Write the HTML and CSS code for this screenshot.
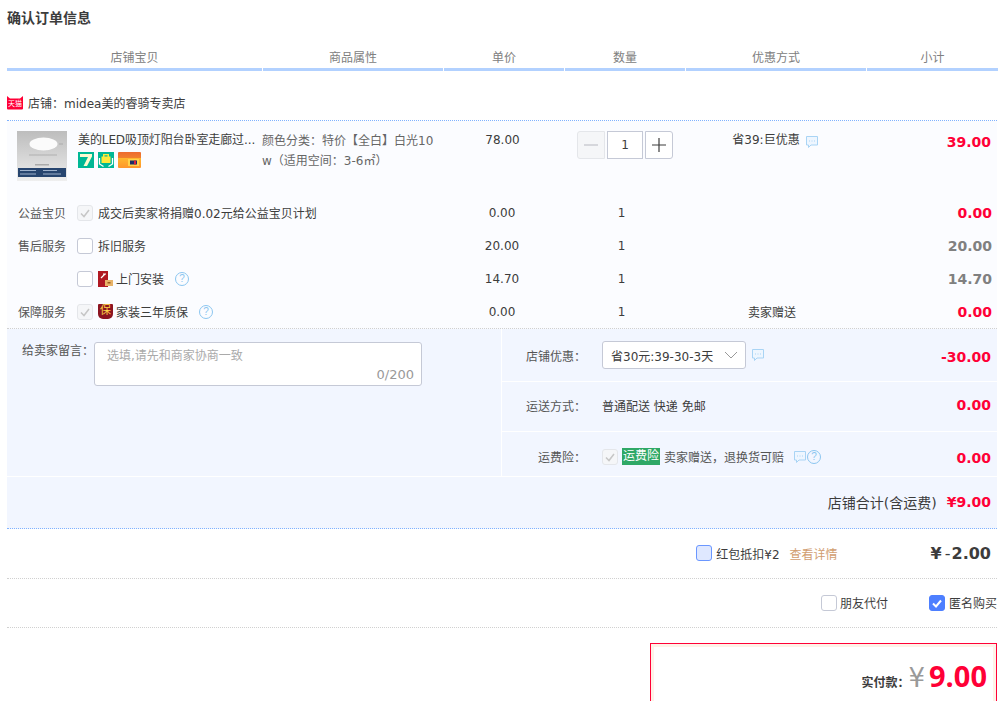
FILE: index.html
```html
<!DOCTYPE html>
<html lang="zh-CN">
<head>
<meta charset="utf-8">
<title>确认订单信息</title>
<link rel="stylesheet" href="styles.css">
</head>
<body>
<svg class="defs" width="0" height="0">
  <symbol id="msg" viewBox="0 0 14 14"><path d="M1.500 1.500h11v8.500H6l-2.500 2.500V10h-2z" fill="#eef6ff" stroke="#a9d4f5" stroke-width="1"/><path d="M4 6h1M6.500 6h1M9 6h1" stroke="#a9d4f5" stroke-width="1"/></symbol>
</svg>
<main class="page">
  <h1 class="page-title">确认订单信息</h1>
  <div class="head-row">
    <div class="head-cell">店铺宝贝</div>
    <div class="head-cell">商品属性</div>
    <div class="head-cell">单价</div>
    <div class="head-cell">数量</div>
    <div class="head-cell">优惠方式</div>
    <div class="head-cell">小计</div>
  </div>
  <div class="shop-row">
    <svg class="tmall" viewBox="0 0 16 14" width="16" height="14"><path fill="#ff0036" d="M0 0l3 2.500h10L16 0v12.500a1 1 0 0 1-1 1H1a1 1 0 0 1-1-1z"/></svg>
    <span class="tmall-text">天猫</span>
    <span>店铺：midea美的睿骑专卖店</span>
  </div>

  <section class="items">
    <div class="order-row product-row">
      <div class="product-cell">
        <svg class="thumb" viewBox="0 0 50 50" width="50" height="50">
          <defs><linearGradient id="thumbBg" x1="0" y1="0" x2="0" y2="1"><stop offset="0" stop-color="#bdbdbd"/><stop offset=".7" stop-color="#dedede"/><stop offset="1" stop-color="#efefef"/></linearGradient></defs>
          <rect width="50" height="50" fill="url(#thumbBg)"/>
          <ellipse cx="26.500" cy="13" rx="14" ry="6.500" fill="#fbfbfb"/>
          <path d="M42 13h4M12 24h28" stroke="#999" stroke-width=".6"/>
          <rect x="18" y="33" width="14" height="1.500" fill="#aaa"/>
          <rect x="1" y="37" width="48" height="9" fill="#27456f"/>
          <path d="M3 39.500h16M26 39.500h14M3 43h16M26 43h18" stroke="#9fb2cc" stroke-width="1"/>
        </svg>
        <div class="product-info">
          <div class="product-title">美的LED吸顶灯阳台卧室走廊过...</div>
          <div class="badges">
            <svg viewBox="0 0 16 16" width="16" height="16"><rect width="16" height="16" fill="#00b895"/><path d="M2 2h12v2.500L9 14H5.500l4.500-9H2z" fill="#fffbd0"/></svg>
            <svg viewBox="0 0 16 16" width="16" height="16"><rect width="16" height="16" fill="#00b895"/><path d="M5 4.500V2h6v2.500h1.500V11h-9V4.500z" fill="#ffe93b"/><path d="M6.500 4.500V3.300h3v1.200z" fill="#00b895"/><path d="M1.500 6v6l4 2.500M14.500 6v6l-4 2.500" stroke="#fff" fill="none" stroke-width="1.300"/></svg>
            <svg viewBox="0 0 23 16" width="23" height="16"><defs><linearGradient id="cardBg" x1="0" y1="0" x2="0" y2="1"><stop offset="0" stop-color="#ed6a2f"/><stop offset=".35" stop-color="#f07f2f"/><stop offset=".4" stop-color="#ffb62e"/><stop offset="1" stop-color="#ff962c"/></linearGradient></defs><rect width="23" height="16" rx="1" fill="url(#cardBg)"/><rect x="10" y="7" width="11" height="7" fill="#ffd24a"/><rect x="12" y="8.500" width="7" height="4" fill="#1d2f66"/><rect x="16" y="8.500" width="2" height="4" fill="#d8203a"/></svg>
          </div>
        </div>
      </div>
      <div class="spec-cell">颜色分类：特价【全白】白光10w（适用空间：3-6㎡）</div>
      <div class="price-cell">78.00</div>
      <div class="qty-cell">
        <span class="qty-btn qty-minus"><svg viewBox="0 0 14 14" width="14" height="14"><path d="M0 7h14" stroke="#c4c6cc" stroke-width="1.300"/></svg></span>
        <span class="qty-input">1</span>
        <span class="qty-btn"><svg viewBox="0 0 14 14" width="14" height="14"><path d="M0 7h14M7 0v14" stroke="#3c3c3c" stroke-width="1.200"/></svg></span>
      </div>
      <div class="promo-cell">省39:巨优惠
        <svg class="msg-icon" viewBox="0 0 14 14" width="14" height="14"><use href="#msg"/></svg>
      </div>
      <div class="amount red">39.00</div>
    </div>

    <div class="order-row service-row">
      <div class="service-main">
        <span class="service-label">公益宝贝</span>
        <span class="check check-disabled"><svg viewBox="0 0 16 16" width="16" height="16"><path d="M4 8.500l3 3 5-6.500" stroke="#c6c6c6" stroke-width="1.500" fill="none"/></svg></span>
        <span>成交后卖家将捐赠0.02元给公益宝贝计划</span>
      </div>
      <div class="price-cell">0.00</div>
      <div class="count-cell">1</div>
      <div></div>
      <div class="amount red">0.00</div>
    </div>

    <div class="order-row service-row">
      <div class="service-main">
        <span class="service-label">售后服务</span>
        <span class="check"></span>
        <span>拆旧服务</span>
      </div>
      <div class="price-cell">20.00</div>
      <div class="count-cell">1</div>
      <div></div>
      <div class="amount grey">20.00</div>
    </div>

    <div class="order-row service-row">
      <div class="service-main">
        <span class="service-label"></span>
        <span class="check"></span>
        <svg class="svc-icon" viewBox="0 0 16 16" width="16" height="16"><rect x="0" y="0" width="10" height="16" fill="#b01822"/><path d="M3 7l4-4M5 3h3" stroke="#fff" stroke-width="1.200"/><rect x="7" y="9" width="8" height="6" fill="#e8b46a"/><rect x="9.500" y="11" width="3" height="1.500" fill="#9a5b1e"/></svg>
        <span>上门安装</span>
        <span class="help help-spaced">?</span>
      </div>
      <div class="price-cell">14.70</div>
      <div class="count-cell">1</div>
      <div></div>
      <div class="amount grey">14.70</div>
    </div>

    <div class="order-row service-row">
      <div class="service-main">
        <span class="service-label">保障服务</span>
        <span class="check check-disabled"><svg viewBox="0 0 16 16" width="16" height="16"><path d="M4 8.500l3 3 5-6.500" stroke="#c6c6c6" stroke-width="1.500" fill="none"/></svg></span>
        <span class="bao">保</span>
        <span>家装三年质保</span>
        <span class="help help-spaced">?</span>
      </div>
      <div class="price-cell">0.00</div>
      <div class="count-cell">1</div>
      <div class="gift-cell">卖家赠送</div>
      <div class="amount red">0.00</div>
    </div>
  </section>

  <section class="shop-extra">
    <div class="extra-grid">
      <div class="message-col">
        <label class="message-label">给卖家留言：</label>
        <div class="message-box">
          <span class="placeholder">选填,请先和商家协商一致</span>
          <span class="counter">0/200</span>
        </div>
      </div>
      <div class="options-col">
        <div class="option-row option-promo">
          <span class="option-label">店铺优惠：</span>
          <div class="option-body">
            <span class="select">省30元:39-30-3天
              <svg viewBox="0 0 14 8" width="14" height="8"><path d="M1 1l6 6 6-6" stroke="#999" fill="none" stroke-width="1"/></svg>
            </span>
            <svg class="msg-icon" viewBox="0 0 14 14" width="14" height="14"><use href="#msg"/></svg>
          </div>
          <span class="amount red">-30.00</span>
        </div>
        <div class="option-row option-ship">
          <span class="option-label">运送方式：</span>
          <div class="option-body">普通配送 快递 免邮</div>
          <span class="amount red">0.00</span>
        </div>
        <div class="option-row option-ins">
          <span class="option-label">运费险：</span>
          <div class="option-body">
            <span class="check check-disabled"><svg viewBox="0 0 16 16" width="16" height="16"><path d="M4 8.500l3 3 5-6.500" stroke="#c6c6c6" stroke-width="1.500" fill="none"/></svg></span>
            <span class="ins-tag">运费险</span>
            <span class="ins-text">卖家赠送，退换货可赔</span>
            <svg class="msg-icon" viewBox="0 0 14 14" width="14" height="14"><use href="#msg"/></svg>
            <span class="help">?</span>
          </div>
          <span class="amount red">0.00</span>
        </div>
      </div>
    </div>
    <div class="shop-total">
      <span class="total-label">店铺合计(含运费)</span>
      <strong class="amount red">¥9.00</strong>
    </div>
  </section>

  <div class="line-row redpack-row">
    <span class="check check-soft"></span>
    <span class="redpack-text">红包抵扣¥2</span>
    <a class="detail-link">查看详情</a>
    <strong class="discount"><span class="discount-yen">¥</span><span class="discount-minus">-</span>2.00</strong>
  </div>
  <div class="line-row options-row">
    <span class="check"></span>
    <span class="friend-text">朋友代付</span>
    <span class="check check-on"><svg viewBox="0 0 16 16" width="16" height="16"><path d="M4 8.500l3 3 5-6" stroke="#fff" stroke-width="2" fill="none"/></svg></span>
    <span>匿名购买</span>
  </div>

  <div class="pay-wrap">
    <div class="pay-box">
      <div class="pay-inner">
        <span class="pay-label">实付款：</span>
        <span class="pay-yen">¥</span>
        <span class="pay-value">9.00</span>
      </div>
    </div>
  </div>
</main>
</body>
</html>
```

FILE: styles.css
```css
* { box-sizing: border-box; }
html, body { margin: 0; height: 701px; overflow: hidden; background: #fff; }
body {
  font-family: "DejaVu Sans", "Noto Sans CJK SC", sans-serif;
  font-size: 12px;
  color: #3c3c3c;
}
.defs { position: absolute; top: 0; left: 0; }
.page { width: 990px; margin-left: 7px; }
.page-title {
  margin: 0;
  height: 48px;
  padding-top: 9px;
  font-size: 14px;
  line-height: 18px;
  font-weight: bold;
}
.head-row {
  display: grid;
  grid-template-columns: 255px 180px 120px 120px 180px 131px;
  column-gap: 1px;
  width: 990px;
  height: 21px;
}
.head-cell {
  text-align: center;
  color: #808080;
  line-height: 20px;
  border-bottom: 3px solid #b2d1ff;
}
.shop-row {
  position: relative;
  display: flex;
  align-items: center;
  gap: 5px;
  height: 52px;
  padding-top: 16px;
  border-bottom: 1px dotted #80b2ff;
}
.tmall-text {
  position: absolute;
  left: 1px;
  top: 30px;
  width: 14px;
  font-size: 7px;
  line-height: 10px;
  color: #fff;
  text-align: center;
}
.items {
  background: #fbfcff;
  border-bottom: 1px dotted #d0d0d0;
}
.order-row {
  display: grid;
  grid-template-columns: 256px 181px 121px 121px 181px 130px;
}
.product-row { height: 75px; padding-top: 10px; }
.product-cell { display: flex; padding-left: 10px; gap: 11px; }
.thumb { flex: none; }
.product-info { min-width: 0; }
.product-title { white-space: nowrap; line-height: 18px; letter-spacing: -0.1px; }
.badges { display: flex; gap: 4px; margin-top: 3px; }
.spec-cell {
  width: 176px;
  margin-left: -1px;
  line-height: 20px;
  color: #666;
  word-break: break-all;
}
.price-cell { text-align: center; padding-right: 5px; }
.count-cell { text-align: center; padding-right: 8px; }
.product-row .price-cell { line-height: 18px; padding-right: 4px; }
.qty-cell { display: flex; padding-left: 12px; gap: 2px; align-self: start; }
.qty-btn, .qty-input {
  display: flex;
  align-items: center;
  justify-content: center;
  height: 28px;
  background: #fff;
  border: 1px solid #c5c9d6;
}
.qty-btn { flex: none; width: 28px; border-radius: 0 3px 3px 0; }
.qty-minus { background: #f5f6f8; border-color: #e4e6ea; border-radius: 3px 0 0 3px; }
.qty-input { flex: none; width: 36px; }
.promo-cell { display: flex; justify-content: center; align-items: flex-start; line-height: 18px; gap: 5px; padding-right: 2px; }
.msg-icon { flex: none; margin-top: 4px; }
.amount {
  padding-right: 5px;
  text-align: right;
  font-size: 14px;
  font-weight: bold;
}
.product-row .amount { line-height: 22px; padding-right: 6px; }
.red { color: #ff0036; }
.grey { color: #808080; }
.service-row { height: 33px; align-items: center; }
.service-main {
  grid-column: span 2;
  display: flex;
  align-items: center;
  white-space: nowrap;
}
.service-label { width: 59px; margin-right: 11px; text-align: right; color: #555; }
.check {
  flex: none;
  display: inline-flex;
  width: 16px;
  height: 16px;
  margin-right: 5px;
  background: #fff;
  border: 1px solid #c5c9d6;
  border-radius: 3px;
}
.check svg { margin: -1px; }
.check-disabled { background: #f5f6f8; border-color: #e4e6ea; }
.check-soft { background: #dfe8ff; border-color: #6b97ff; }
.check-on { background: #4d7fff; border-color: #4d7fff; }
.svc-icon { flex: none; margin-right: 2px; }
.bao {
  flex: none;
  width: 15px;
  height: 15px;
  margin-right: 3px;
  font-size: 11px;
  line-height: 14px;
  text-align: center;
  color: #ffd84a;
  background: #8c1420;
  border-radius: 1px 1px 5px 5px;
}
.help {
  flex: none;
  width: 14px;
  height: 14px;
  border: 1.500px solid #8cc6f0;
  border-radius: 50%;
  font-family: "Liberation Sans", sans-serif;
  font-size: 10px;
  line-height: 11px;
  text-align: center;
  color: #8cc6f0;
}
.help-spaced { margin-left: 11px; }
.gift-cell { text-align: center; padding-right: 9px; }
.shop-extra {
  background: #f2f6ff;
  border-bottom: 1px dotted #80b2ff;
}
.extra-grid {
  display: grid;
  grid-template-columns: 494px 1fr;
  height: 148px;
  border-bottom: 1px solid #fff;
}
.message-col { display: flex; padding: 13px 0 0 15px; gap: 6px; }
.message-label { flex: none; width: 66px; white-space: nowrap; line-height: 18px; color: #555; }
.message-box {
  display: flex;
  flex-direction: column;
  justify-content: space-between;
  width: 328px;
  height: 44px;
  padding: 4px 7px 1px 12px;
  background: #fff;
  border: 1px solid #c5c9d6;
  border-radius: 3px;
}
.placeholder { color: #aaa; line-height: 18px; }
.counter { align-self: flex-end; color: #999; font-size: 13px; line-height: 18px; }
.options-col { border-left: 1px solid #fff; display: flex; flex-direction: column; }
.option-row {
  display: grid;
  grid-template-columns: 84px 1fr auto;
  column-gap: 16px;
  align-items: center;
  border-bottom: 1px solid #fff;
}
.option-row .amount { padding-right: 6px; }
.option-promo { height: 53px; }
.option-promo .amount { padding-top: 4px; }
.option-ship { height: 50px; padding-bottom: 2px; }
.option-ship .amount { padding-bottom: 2px; }
.option-ins { flex: 1; border-bottom: 0; padding-top: 5px; }
.option-ins .amount { padding-top: 2px; }
.option-label { text-align: right; color: #555; white-space: nowrap; }
.option-body { display: flex; align-items: center; white-space: nowrap; }
.select {
  display: flex;
  align-items: center;
  justify-content: space-between;
  width: 144px;
  height: 28px;
  padding: 0 7px 0 8px;
  background: #fff;
  border: 1px solid #c5c9d6;
  border-radius: 3px;
}
.option-promo .msg-icon { margin: 0 0 0 5px; }
.option-ins .check { margin-right: 4px; }
.ins-tag {
  width: 38px;
  height: 17px;
  line-height: 17px;
  text-align: center;
  color: #fff;
  background: #2fa866;
}
.ins-text { margin-left: 4px; margin-right: 9px; color: #555; }
.option-ins .msg-icon { margin-top: 0; }
.shop-total {
  display: flex;
  justify-content: flex-end;
  align-items: center;
  gap: 10px;
  height: 51px;
  padding-bottom: 1px;
}
.total-label { font-size: 14px; }
.shop-total .amount { padding-right: 6px; }
.line-row {
  display: flex;
  justify-content: flex-end;
  align-items: center;
  border-bottom: 1px dotted #d0d0d0;
  white-space: nowrap;
}
.redpack-row { height: 50px; padding: 0 6px 1px 0; }
.redpack-row .check { margin-right: 4px; }
.detail-link { margin-left: 10px; color: #d19d70; }
.discount { margin-left: 93px; font-size: 16px; }
.discount-yen { margin-right: 3px; }
.discount-minus { font-weight: normal; margin-right: 1px; }
.options-row { height: 49px; padding-bottom: 1px; }
.options-row .check { margin-right: 3px; }
.options-row .check-on { margin-right: 4px; }
.friend-text { margin-right: 41px; }
.pay-wrap { display: flex; justify-content: flex-end; padding-top: 15px; }
.pay-box {
  width: 347px;
  height: 120px;
  border: 1px solid #ff0036;
  background: #fff;
}
.pay-inner {
  display: flex;
  justify-content: flex-end;
  align-items: baseline;
  height: 100%;
  padding: 12px 6px 0 0;
  border: 3px solid #fff2e8;
}
.pay-label { font-weight: bold; margin-right: -1px; }
.pay-yen { font-size: 26px; color: #999; margin-right: 4px; }
.pay-value { font-family: "Open Sans", sans-serif; font-weight: bold; font-size: 29px; line-height: 34px; color: #ff0036; }
```
